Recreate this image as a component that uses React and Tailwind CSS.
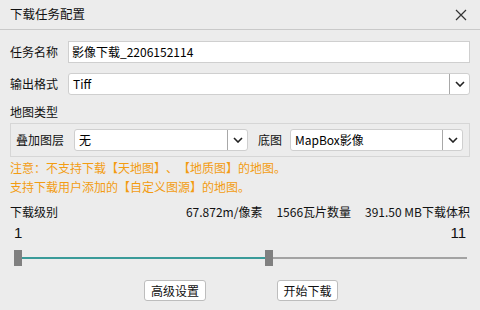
import React from 'react';

const font = { fontFamily: '"Noto Sans CJK SC", "Microsoft YaHei", "Liberation Sans", sans-serif' };

const Chevron = () => (
  <svg width="10" height="6" viewBox="0 0 10 6">
    <path d="M1 1 L5 5 L9 1" fill="none" stroke="#222" strokeWidth="1.6" />
  </svg>
);

const Select = ({ value, className = '' }) => (
  <div className={`flex h-[22px] bg-white border border-[#cfcfcf] rounded-[3px] ${className}`}>
    <div className="flex-1 flex items-center pl-[4px] text-[12px] text-black">{value}</div>
    <div className="w-[20px] border-l border-[#a8a8a8] flex items-center justify-center">
      <Chevron />
    </div>
  </div>
);

export default function App() {
  return (
    <div className="w-[480px] h-[310px] bg-[#ececec] text-[12px] text-[#111] overflow-hidden [text-spacing-trim:space-all]" style={font}>
      {/* title bar */}
      <div className="h-[30px] flex items-center justify-between pl-[10px] pr-[13px] border-b border-[#c9c9c9]">
        <span className="text-[12.5px]">下载任务配置</span>
        <svg width="12" height="12" viewBox="0 0 12 12">
          <path d="M1 1 L11 11 M11 1 L1 11" stroke="#333" strokeWidth="1.2" />
        </svg>
      </div>

      <div className="px-[10px]">
        <div className="flex items-center mt-[11px]">
          <span className="w-[58px] leading-[16px]">任务名称</span>
          <div className="flex-1 h-[22px] bg-white border border-[#cfcfcf] flex items-center pl-[3px] text-[12px] text-black">
            影像下载_2206152114
          </div>
        </div>

        <div className="flex items-center mt-[10px]">
          <span className="w-[58px] leading-[16px]">输出格式</span>
          <Select value="Tiff" className="flex-1" />
        </div>

        <div className="mt-[9px] leading-[16px]">地图类型</div>

        <div className="mt-[3px] h-[34px] border border-[#d6d6d6] flex items-center pl-[5px] pr-[6px]">
          <span className="w-[58px] leading-[16px]">叠加图层</span>
          <Select value="无" className="w-[174px]" />
          <span className="ml-[10px] w-[32px] leading-[16px]">底图</span>
          <Select value="MapBox影像" className="flex-1" />
        </div>

        <div className="text-[#f39c12] leading-[19px] mt-[1px]">
          <div>注意：不支持下载【天地图】、【地质图】的地图。</div>
          <div>支持下载用户添加的【自定义图源】的地图。</div>
        </div>

        <div className="flex justify-between items-center mt-[8px] leading-[16px]">
          <span>下载级别</span>
          <div className="flex gap-[14px]">
            <span>67.872m/像素</span>
            <span>1566瓦片数量</span>
            <span>391.50 MB下载体积</span>
          </div>
        </div>

        <div className="flex justify-between mt-[4px] px-[4px] text-[15px] leading-[18px] font-['Liberation_Sans',sans-serif]">
          <span>1</span>
          <span>11</span>
        </div>

        <div className="flex items-center mt-[8px] h-[16px] pl-[4px] pr-[3px]">
          <div className="w-[8px] h-[16px] bg-[#808080]" />
          <div className="w-[243px] h-[2px] bg-[#3a9b99]" />
          <div className="w-[8px] h-[16px] bg-[#808080]" />
          <div className="flex-1 h-[2px] bg-[#a3a3a3]" />
        </div>

        <div className="flex justify-center gap-[71px] mt-[14px] pl-[2px]">
          <button className="w-[62px] h-[21px] bg-white border border-[#bdbdbd] rounded-[3px] text-[12px] leading-[16px]">高级设置</button>
          <button className="w-[61px] h-[21px] bg-white border border-[#bdbdbd] rounded-[3px] text-[12px] leading-[16px]">开始下载</button>
        </div>
      </div>
    </div>
  );
}
